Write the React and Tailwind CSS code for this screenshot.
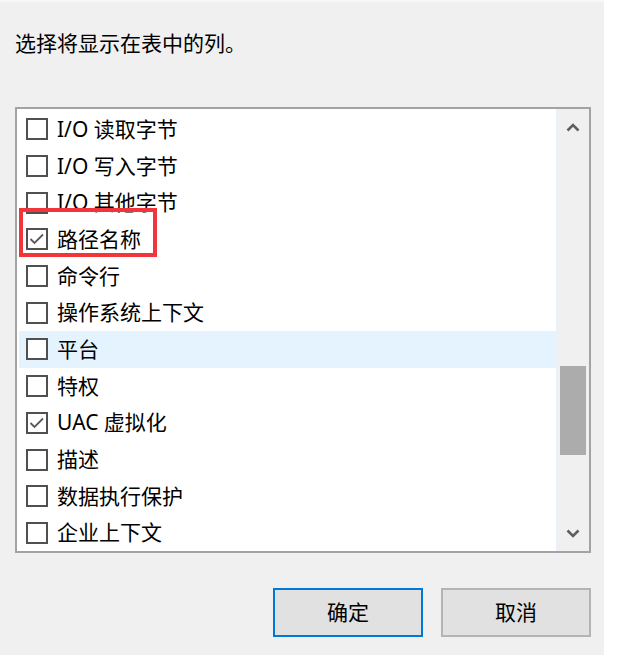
import React from "react";

const items = [
  { label: "I/O 读取字节", checked: false },
  { label: "I/O 写入字节", checked: false },
  { label: "I/O 其他字节", checked: false },
  { label: "路径名称", checked: true },
  { label: "命令行", checked: false },
  { label: "操作系统上下文", checked: false },
  { label: "平台", checked: false, hover: true },
  { label: "特权", checked: false },
  { label: "UAC 虚拟化", checked: true },
  { label: "描述", checked: false },
  { label: "数据执行保护", checked: false },
  { label: "企业上下文", checked: false },
];

function CheckBox({ checked }) {
  return (
    <div className="w-[22px] h-[22px] border-2 border-[#505050] bg-white flex items-center justify-center shrink-0">
      {checked && (
        <svg width="18" height="18" viewBox="0 0 18 18">
          <polyline
            points="2.5,9 6.5,13 15,4.5"
            fill="none"
            stroke="#5a5a5a"
            strokeWidth="1.8"
          />
        </svg>
      )}
    </div>
  );
}

export default function App() {
  return (
    <div
      className="w-[641px] h-[655px] flex bg-white text-black"
      style={{ fontFamily: "'Noto Sans', 'Noto Sans CJK SC', sans-serif" }}
    >
      <div className="w-[604px] h-full bg-[#f0f0f0] flex flex-col relative">
        <div className="h-[2px] bg-[#f7f7f7]" />
        <div className="pl-[15px] pt-[27px] text-[21px] leading-[28px]">
          选择将显示在表中的列。
        </div>
        <div className="ml-[15px] mt-[50px] w-[576px] h-[446px] border-2 border-[#a3a3a3] bg-white flex">
          <div className="flex-1 pt-[2px] pl-[2px] overflow-hidden">
            {items.map((it, i) => (
              <div
                key={i}
                className={
                  "h-[36.7px] flex items-center pl-[7px] gap-[9px] text-[21px] " +
                  (it.hover ? "bg-[#e5f3ff]" : "")
                }
              >
                <CheckBox checked={it.checked} />
                <span className="leading-none">{it.label}</span>
              </div>
            ))}
          </div>
          <div className="w-[33px] h-full bg-[#f0f0f0] border-l border-[#e8f2fc] flex flex-col items-center relative">
            <div className="h-[36px] flex items-center justify-center">
              <svg width="14" height="9" viewBox="0 0 14 9">
                <polyline points="1.5,7.5 7,2 12.5,7.5" fill="none" stroke="#5f5f5f" strokeWidth="2.6" />
              </svg>
            </div>
            <div className="mt-[221px] w-[26px] h-[89px] bg-[#acacac]" />
            <div className="flex-1" />
            <div className="h-[36px] flex items-center justify-center">
              <svg width="14" height="9" viewBox="0 0 14 9">
                <polyline points="1.5,1.5 7,7 12.5,1.5" fill="none" stroke="#5f5f5f" strokeWidth="2.6" />
              </svg>
            </div>
          </div>
        </div>
        <div className="mt-[35px] pr-[13px] flex justify-end gap-[18px]">
          <button className="w-[150px] h-[49px] bg-[#e1e1e1] border-2 border-[#0078d7] text-[21px] flex items-center justify-center">
            确定
          </button>
          <button className="w-[150px] h-[49px] bg-[#e1e1e1] border-2 border-[#b4b4b4] text-[21px] flex items-center justify-center">
            取消
          </button>
        </div>
        <div className="absolute left-[19px] top-[208px] w-[138px] h-[49px] border-4 border-[#f0353b] pointer-events-none" />
      </div>
    </div>
  );
}
